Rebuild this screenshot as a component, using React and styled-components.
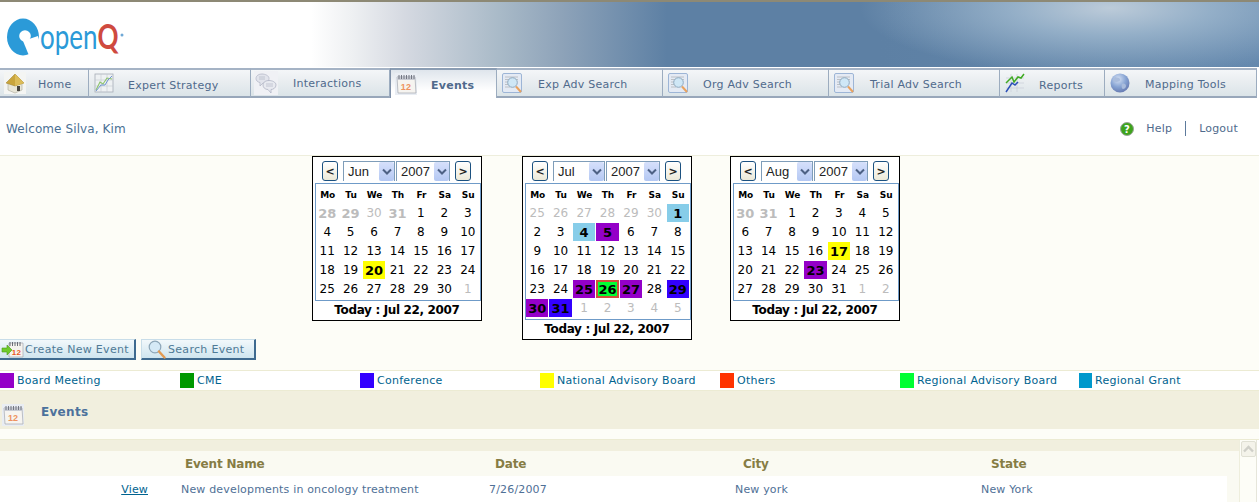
import React from 'react'
import styled, { createGlobalStyle } from 'styled-components'

const GlobalStyle = createGlobalStyle`
    html, body {
        margin: 0;
        padding: 0;
        height: 502px;
        overflow: hidden;
        background: #fff;
        font-family: "DejaVu Sans", Verdana, sans-serif;
        font-size: 11px;
    }
    * { box-sizing: border-box; }
`

/* ---- icons ---- */

const HouseIcon = () => (
    <svg width="22" height="22" viewBox="0 0 22 22">
        <rect width="22" height="22" fill="#f4f5f3" />
        <path d="M4 11v7l7 3 7-3v-7l-7-3z" fill="#e8e6d8" stroke="#a9a898" strokeWidth=".6" />
        <path d="M11 2 2 11l9 3 9-3z" fill="#c9a53c" stroke="#9c7f2a" strokeWidth=".5" />
        <path d="M11 2v12l9-3z" fill="#dcbc58" />
        <rect x="13" y="14" width="3" height="5" fill="#47453e" />
    </svg>
)

const ChartIcon = () => (
    <svg width="20" height="20" viewBox="0 0 20 20">
        <rect x="1" y="1" width="18" height="18" fill="#eef1f3" stroke="#a6adb6" strokeWidth=".8" />
        <path d="M1 7h18M1 13h18M7 1v18M13 1v18" stroke="#c5cbd2" strokeWidth=".6" />
        <path d="M2 17 6 9l3 2 4-6 5 1" fill="none" stroke="#8cc36a" strokeWidth="1.1" />
        <path d="M2 18 7 12l4 0 3-5 4-4" fill="none" stroke="#6f94cf" strokeWidth="1" />
    </svg>
)

const BubblesIcon = () => (
    <svg width="24" height="24" viewBox="0 0 24 24">
        <rect width="24" height="24" fill="#f0f1f5" />
        <path d="M2 7.5C2 4.5 5 3 8 3s7 1.500 7 4.500S12 12 9 12l-3 3v-3.500C3.500 11 2 9.500 2 7.500z" fill="#e2e4ec" stroke="#b5b9c8" strokeWidth=".8" />
        <path d="M9 14c0-3 3-4.500 6-4.500s7 1.500 7 4.500-3 4.500-5 4.500V22l-3-3.500c-3 0-5-2-5-4.500z" fill="#e8eaf0" stroke="#b0b4c4" strokeWidth=".8" />
        <path d="M5 6h6M5 8h6M12 13h7M12 15h7" stroke="#b9bdca" strokeWidth=".8" />
    </svg>
)

const CalendarIcon = () => (
    <svg width="22" height="22" viewBox="0 0 22 22">
        <rect width="22" height="22" fill="#e9edf3" />
        <path d="M2 4h18l1 16H3z" fill="#f6f4f0" stroke="#a4a7b0" strokeWidth=".7" />
        <path d="M2 3h18v4H2z" fill="#c9ccd4" />
        <path d="M4 2v4M6.500 2v4M9 2v4M11.500 2v4M14 2v4M16.500 2v4M19 2v4" stroke="#686c78" strokeWidth=".9" />
        <text x="11" y="16.500" textAnchor="middle" fontSize="9" fontWeight="700" fontFamily="Liberation Sans, sans-serif" fill="#ee9360">12</text>
    </svg>
)

const SearchDocIcon = () => (
    <svg width="21" height="21" viewBox="0 0 21 21">
        <rect x=".5" y=".5" width="19" height="19" rx="1.500" fill="#e4eaf4" stroke="#9db5d6" />
        <path d="M3 4h13M3 6.500h13M3 9h4M3 11.500h4M3 14h5" stroke="#b8bcc0" strokeWidth=".9" />
        <circle cx="10.500" cy="9.500" r="4.800" fill="#cfe7f6" stroke="#8fa9bf" />
        <path d="m14 13.500 5 5.500" stroke="#e9a25e" strokeWidth="2" />
    </svg>
)

const ReportIcon = () => (
    <svg width="20" height="20" viewBox="0 0 20 20">
        <path d="M1 5h18M1 10h18M1 15h18M6 1v18M12 1v18" stroke="#c9ced8" strokeWidth=".7" />
        <path d="M1 10 7 4l2 5 4-5 3 1 3-4" fill="none" stroke="#3faa22" strokeWidth="1.500" />
        <path d="M1 19 7 10l3 2 3-3" fill="none" stroke="#2b4fb8" strokeWidth="1.500" />
    </svg>
)

const GlobeIcon = () => (
    <svg width="20" height="20" viewBox="0 0 20 20">
        <defs>
            <radialGradient id="globe" cx="40%" cy="30%" r="75%">
                <stop offset="0" stopColor="#d7e2f4" />
                <stop offset=".55" stopColor="#86a3d3" />
                <stop offset="1" stopColor="#6477ae" />
            </radialGradient>
        </defs>
        <circle cx="10" cy="10" r="9.500" fill="url(#globe)" />
        <path d="M5 4c2 1 4 0 5 2s-2 3-4 3-3-1-3-2zM12 11c2-1 4 0 4 2s-2 3-3 3-2-3-1-5z" fill="#a9bcdc" />
    </svg>
)

const HelpIcon = () => (
    <svg width="14" height="14" viewBox="0 0 14 14">
        <circle cx="7" cy="7" r="6.500" fill="#3ea31c" stroke="#9aa59a" />
        <text x="7" y="10.500" textAnchor="middle" fontSize="10" fontWeight="700" fontFamily="DejaVu Sans, sans-serif" fill="#fff">?</text>
    </svg>
)

const CreateIcon = () => (
    <svg width="23" height="17" viewBox="0 0 23 17">
        <path d="M8 2h14v14H8z" fill="#f5f3ee" stroke="#a4a7b0" strokeWidth=".7" />
        <path d="M9 1v4M11.500 1v4M14 1v4M16.500 1v4M19 1v4" stroke="#5a5e68" strokeWidth=".9" />
        <text x="15.500" y="13.500" textAnchor="middle" fontSize="8" fontWeight="700" fontFamily="Liberation Sans, sans-serif" fill="#e8581e">12</text>
        <path d="M1 7h5V4l5 5-5 5v-3H1z" fill="#6ecb2a" stroke="#4b9a18" strokeWidth=".6" />
    </svg>
)

const LensIcon = () => (
    <svg width="18" height="19" viewBox="0 0 18 19">
        <circle cx="7" cy="7" r="5.800" fill="#d5e9f6" stroke="#8da6b8" strokeWidth="1.200" />
        <path d="m11 11.500 5.500 6" stroke="#e39a52" strokeWidth="2.400" strokeLinecap="round" />
    </svg>
)

const Logo = () => (
    <svg width="130" height="40" viewBox="0 0 130 40" overflow="visible">
        <ellipse cx="16" cy="19" rx="16" ry="18.500" fill="#2b9ad8" />
        <circle cx="18" cy="18" r="5.800" fill="#fff" />
        <path d="M16 23 23 40 36 36 31 18z" fill="#fff" />
        <text x="33" y="23" transform="scale(1 1.35)" fontSize="26" fontFamily="Lato, sans-serif" fill="#2b9ad8">
            open<tspan fill="#cf4a3f" fontWeight="700">Q</tspan>
        </text>
        <circle cx="115" cy="17" r="1.500" fill="#6fa8d6" />
    </svg>
)

/* ---- data ---- */

const TABS = [
    { label: 'Home', width: 89, icon: <HouseIcon />, dx: -2 },
    { label: 'Expert Strategy', width: 162, icon: <ChartIcon />, dx: -1, dy: 1 },
    { label: 'Interactions', width: 139, icon: <BubblesIcon />, dx: 2, dy: -1 },
    { label: 'Events', width: 107, icon: <CalendarIcon />, active: true },
    { label: 'Exp Adv Search', width: 166, icon: <SearchDocIcon />, dx: 1 },
    { label: 'Org Adv Search', width: 166, icon: <SearchDocIcon /> },
    { label: 'Trial Adv Search', width: 171, icon: <SearchDocIcon />, dx: 1 },
    { label: 'Reports', width: 105, icon: <ReportIcon />, dx: -1, dy: 1 },
    { label: 'Mapping Tools', width: 152, icon: <GlobeIcon /> }
]

const PURPLE = '#9400c8'
const BLUE = '#3300ff'
const YELLOW = '#ffff00'
const SKY = '#87cde9'

const CALENDARS = [
    {
        month: 'Jun',
        leading: [28, 29, 30, 31],
        boldMuted: [28, 29, 31],
        days: 30,
        trailing: [1],
        marks: { 20: YELLOW }
    },
    {
        month: 'Jul',
        leading: [25, 26, 27, 28, 29, 30],
        boldMuted: [],
        days: 31,
        trailing: [1, 2, 3, 4, 5],
        marks: { 1: SKY, 4: SKY, 5: PURPLE, 25: PURPLE, 26: '#00ff33', 27: PURPLE, 29: BLUE, 30: PURPLE, 31: BLUE },
        today: 26
    },
    {
        month: 'Aug',
        leading: [30, 31],
        boldMuted: [30, 31],
        days: 31,
        trailing: [1, 2],
        marks: { 17: YELLOW, 23: PURPLE }
    }
]

const LEGEND = [
    { label: 'Board Meeting', color: '#9400c8' },
    { label: 'CME', color: '#009900' },
    { label: 'Conference', color: '#3300ff' },
    { label: 'National Advisory Board', color: '#ffff00' },
    { label: 'Others', color: '#ff3300' },
    { label: 'Regional Advisory Board', color: '#00ff33' },
    { label: 'Regional Grant', color: '#0099cc', narrow: true }
]

const WEEK = ['Mo', 'Tu', 'We', 'Th', 'Fr', 'Sa', 'Su']

/* ---- components ---- */

const Chevron = () => (
    <svg width="10" height="7" viewBox="0 0 10 7">
        <path d="M1 1.500 5 5.500l4-4" fill="none" stroke="#4d6185" strokeWidth="2" />
    </svg>
)

const Calendar = ({ data }) => {
    const days = Array.from({ length: data.days }, (_, i) => i + 1)
    return (
        <CalendarBox>
            <CalendarTop>
                <StepButton>&lt;</StepButton>
                <FakeSelect $width={52}>
                    {data.month}
                    <SelectArrow>
                        <Chevron />
                    </SelectArrow>
                </FakeSelect>
                <FakeSelect $width={54}>
                    2007
                    <SelectArrow>
                        <Chevron />
                    </SelectArrow>
                </FakeSelect>
                <StepButton $last>&gt;</StepButton>
            </CalendarTop>
            <MonthGrid>
                {WEEK.map((w) => (
                    <WeekHead key={w}>{w}</WeekHead>
                ))}
                {data.leading.map((d) => (
                    <DayCell key={'l' + d} $muted $bold={data.boldMuted.includes(d)}>
                        {d}
                    </DayCell>
                ))}
                {days.map((d) => (
                    <DayCell key={d} $bg={data.marks[d]} $bold={!!data.marks[d]} $today={data.today === d}>
                        {d}
                    </DayCell>
                ))}
                {data.trailing.map((d) => (
                    <DayCell key={'t' + d} $muted>
                        {d}
                    </DayCell>
                ))}
            </MonthGrid>
            <TodayLine>Today : Jul 22, 2007</TodayLine>
        </CalendarBox>
    )
}

export default function App() {
    return (
        <Page>
            <GlobalStyle />
            <Header>
                <LogoWrap>
                    <Logo />
                </LogoWrap>
            </Header>
            <Nav>
                {TABS.map((t) => (
                    <Tab key={t.label} $width={t.width} $active={t.active}>
                        <TabIcon>{t.icon}</TabIcon>
                        <TabLabel $dx={t.dx} $dy={t.dy}>
                            {t.label}
                        </TabLabel>
                    </Tab>
                ))}
            </Nav>
            <WelcomeRow>
                <span>Welcome Silva, Kim</span>
                <UserLinks>
                    <HelpIcon />
                    <HelpLink>Help</HelpLink>
                    <LogoutLink>Logout</LogoutLink>
                </UserLinks>
            </WelcomeRow>
            <CalendarZone>
                <CalendarRow>
                    {CALENDARS.map((c) => (
                        <Calendar key={c.month} data={c} />
                    ))}
                </CalendarRow>
                <ActionRow>
                    <ActionButton $width={137} $pad={1} $gap={1}>
                        <CreateIcon />
                        Create New Event
                    </ActionButton>
                    <ActionButton $width={115} $pad={6} $gap={2}>
                        <LensIcon />
                        Search Event
                    </ActionButton>
                </ActionRow>
            </CalendarZone>
            <Legend>
                {LEGEND.map((l) => (
                    <LegendItem key={l.label}>
                        <Swatch $color={l.color} $narrow={l.narrow} />
                        {l.label}
                    </LegendItem>
                ))}
            </Legend>
            <SectionBar>
                <CalendarIcon />
                <SectionTitle>Events</SectionTitle>
            </SectionBar>
            <Spacer />
            <TableZone>
                <TableWrap>
                    <TableTop />
                    <HeadRow>
                        <span />
                        <HeadCell $pad={4}>Event Name</HeadCell>
                        <HeadCell $pad={6}>Date</HeadCell>
                        <HeadCell $pad={8}>City</HeadCell>
                        <HeadCell $pad={10}>State</HeadCell>
                    </HeadRow>
                    <BodyRow>
                        <ViewCell>
                            <ViewLink href="#">View</ViewLink>
                        </ViewCell>
                        <span>New developments in oncology treatment</span>
                        <span>7/26/2007</span>
                        <span>New york</span>
                        <span>New York</span>
                    </BodyRow>
                </TableWrap>
                <ScrollTrack>
                    <ScrollUp>
                        <svg width="11" height="8" viewBox="0 0 11 8">
                            <path d="M1 6.500 5.500 2 10 6.500" fill="none" stroke="#cfcfc8" strokeWidth="2.400" />
                        </svg>
                    </ScrollUp>
                </ScrollTrack>
            </TableZone>
        </Page>
    )
}

/* ---- styles ---- */

const Page = styled.div`
    width: 1259px;
    height: 502px;
    overflow: hidden;
    border-top: 2px solid #8d8975;
`

const Header = styled.header`
    height: 65px;
    margin-bottom: 1px;
    display: flex;
    align-items: center;
    background:
        radial-gradient(ellipse 250px 68px at 1110px 6px, #bccbd9 0%, rgba(160, 185, 207, 0.8) 40%, rgba(101, 137, 174, 0) 100%),
        linear-gradient(90deg, #fff 0, #fff 311px, #eff1f3 350px, #d5d9e1 405px, #a9bac8 499px, #8ea3b9 561px, #5d80a4 667px, #5d80a4 880px, #6589ae 1259px);
`

const LogoWrap = styled.div`
    padding: 0 0 0 7px;
    margin-top: 6px;
    display: flex;
`

const Nav = styled.nav`
    display: flex;
    height: 30px;
    width: 1257px;
`

const Tab = styled.div`
    flex: none;
    width: ${(p) => p.$width}px;
    display: flex;
    align-items: center;
    gap: 13px;
    padding-left: 3px;
    letter-spacing: 0.25px;
    font-weight: ${(p) => (p.$active ? 700 : 400)};
    color: #506a8c;
    border-top: 2px solid ${(p) => (p.$active ? '#8b9db3' : '#a5b3c5')};
    border-bottom: ${(p) => (p.$active ? '0' : '2px solid #98a7ba')};
    border-right: 1px solid #9cacbf;
    border-left: ${(p) => (p.$active ? '1px solid #7f90a8' : '0')};
    background: ${(p) =>
        p.$active
            ? 'linear-gradient(#dfe5ec, #ffffff 75%)'
            : 'linear-gradient(#f4f6f8 0%, #e9edf0 45%, #dbe4e8 100%)'};
`

const TabIcon = styled.span`
    width: 24px;
    display: flex;
    align-items: center;
    justify-content: center;
    flex: none;
`

const TabLabel = styled.span`
    margin-left: ${(p) => p.$dx || 0}px;
    padding-top: ${(p) => 3 + (p.$dy || 0) * 2}px;
`

const WelcomeRow = styled.div`
    height: 58px;
    display: flex;
    align-items: center;
    justify-content: space-between;
    padding: 4px 21px 0 6px;
    background: #fff;
    color: #4a7094;
    font-size: 12px;
    letter-spacing: 0.1px;
    border-bottom: 1px solid #eeeedd;
`

const UserLinks = styled.div`
    display: flex;
    align-items: center;
    font-size: 11px;
    letter-spacing: 0.2px;
    color: #506a8c;
`

const HelpLink = styled.span`
    margin-left: 12px;
    padding-right: 13px;
`

const LogoutLink = styled.span`
    border-left: 1px solid #5d7a9c;
    padding-left: 13px;
    line-height: 15px;
`

const CalendarZone = styled.div`
    height: 215px;
    background: #fdfdf7;
    border-bottom: 1px solid #ecebd3;
`

const CalendarRow = styled.div`
    display: flex;
    align-items: flex-start;
    gap: 40px;
    height: 183px;
    padding-left: 312px;

    & > *:last-child {
        margin-left: -2px;
    }
`

const CalendarBox = styled.div`
    width: 170px;
    border: 1px solid #000;
    background: #fff;
    padding: 0 0 0 2px;
`

const CalendarTop = styled.div`
    display: flex;
    align-items: flex-start;
    height: 26px;
    padding: 4px 0 0 7px;
`

const StepButton = styled.button`
    width: 16px;
    height: 20px;
    margin: 0 ${(p) => (p.$last ? '0 0 5px' : '5px 0 0')};
    margin-left: ${(p) => (p.$last ? '4px' : '0')};
    padding: 0;
    font-family: "DejaVu Sans", sans-serif;
    font-size: 11px;
    font-weight: 700;
    color: #222;
    background: linear-gradient(#ffffff, #ece9d8);
    border: 1px solid #1c5180;
    border-radius: 3px;
`

const FakeSelect = styled.div`
    position: relative;
    width: ${(p) => p.$width}px;
    height: 20px;
    margin-right: 1px;
    padding-left: 4px;
    border: 1px solid #7f9db9;
    border-bottom: 0;
    font-family: "Liberation Sans", sans-serif;
    font-size: 13px;
    line-height: 19px;
    color: #222;
    background: #fff;
`

const SelectArrow = styled.span`
    position: absolute;
    right: 0;
    top: 0;
    width: 15px;
    height: 19px;
    display: flex;
    align-items: center;
    justify-content: center;
    background: linear-gradient(#d6e0fb, #b4c8f3);
    border-radius: 2px;
`

const MonthGrid = styled.div`
    width: 166px;
    display: grid;
    grid-template-columns: repeat(7, 1fr);
    grid-auto-rows: 19px;
    padding: 1px 0;
    border: 1px solid #6f9bc8;
`

const WeekHead = styled.div`
    display: flex;
    align-items: center;
    justify-content: center;
    font-size: 9px;
    font-weight: 700;
    color: #000;
`

const DayCell = styled.div`
    display: flex;
    align-items: center;
    justify-content: center;
    margin: 0 1px 1px 0;
    font-size: ${(p) => (p.$bold ? '13px' : '12px')};
    font-weight: ${(p) => (p.$bold ? 700 : 400)};
    color: ${(p) => (p.$muted ? '#bcbcbc' : '#000')};
    background: ${(p) => p.$bg || 'transparent'};
    border: ${(p) => (p.$today ? '2px solid #d0503c' : '0')};
`

const TodayLine = styled.div`
    height: 19px;
    margin-left: -2px;
    text-align: center;
    font-size: 12px;
    font-weight: 700;
    letter-spacing: -0.35px;
    line-height: 18px;
    color: #000;
`

const ActionRow = styled.div`
    display: flex;
    gap: 5px;
    margin-left: -1px;
`

const ActionButton = styled.div`
    width: ${(p) => p.$width}px;
    height: 21px;
    display: flex;
    align-items: center;
    gap: ${(p) => p.$gap}px;
    padding-left: ${(p) => p.$pad}px;
    letter-spacing: 0.3px;
    color: #4f7a96;
    background: linear-gradient(#f2f8fb, #cfe5ef);
    border: 1px solid #c8dde9;
    border-right: 2px solid #3f6a8f;
    border-bottom: 2px solid #3f6a8f;
`

const Legend = styled.div`
    height: 20px;
    display: grid;
    grid-template-columns: repeat(7, 180px);
    align-items: center;
    background: #fff;
    border-bottom: 1px solid #ecebd3;
`

const LegendItem = styled.div`
    display: flex;
    align-items: center;
    gap: 3px;
    letter-spacing: 0.27px;
    color: #00638f;
    white-space: nowrap;
`

const Swatch = styled.span`
    width: ${(p) => (p.$narrow ? '13px' : '14px')};
    height: 15px;
    flex: none;
    margin-left: ${(p) => (p.$narrow ? '-1px' : '0')};
    background: ${(p) => p.$color};
`

const SectionBar = styled.div`
    height: 38px;
    display: flex;
    align-items: center;
    gap: 17px;
    padding: 10px 0 0 2px;
    background: #f1efde;
`

const SectionTitle = styled.h2`
    margin: 0 0 6px;
    font-size: 12px;
    font-weight: 700;
    letter-spacing: 0.3px;
    color: #4c719c;
`

const Spacer = styled.div`
    height: 11px;
    background: #fdfdf7;
    border-bottom: 1px solid #ecebd3;
`

const TableZone = styled.div`
    display: flex;
    width: 1257px;
`

const TableWrap = styled.div`
    width: 1240px;
`

const TableTop = styled.div`
    height: 11px;
    background: #f1efde;
`

const COLUMNS = '181px 308px 246px 246px 1fr'

const HeadRow = styled.div`
    height: 25px;
    display: grid;
    grid-template-columns: ${COLUMNS};
    align-items: center;
    background: #fafaf2;
`

const HeadCell = styled.div`
    padding-left: ${(p) => p.$pad}px;
    font-size: 12px;
    font-weight: 700;
    letter-spacing: -0.2px;
    color: #867c44;
`

const BodyRow = styled.div`
    height: 30px;
    width: 1227px;
    display: grid;
    grid-template-columns: ${COLUMNS};
    align-items: center;
    padding-bottom: 3px;
    letter-spacing: 0.17px;
    color: #4f7096;
    background: #fff;
    box-shadow: 13px 0 0 #fafaf2;
`

const ViewCell = styled.div`
    padding-right: 33px;
    text-align: right;
`

const ViewLink = styled.a`
    color: #00638f;
    text-decoration: underline;
`

const ScrollTrack = styled.div`
    flex: 1;
    height: 70px;
    padding: 1px 0 0 1px;
    background: #fdfdf7;
    border-left: 1px solid #eeeedd;
    border-right: 1px solid #e6e6da;
`

const ScrollUp = styled.div`
    width: 15px;
    height: 16px;
    display: flex;
    align-items: center;
    justify-content: center;
    background: #f4f3ea;
    border: 1px solid #e0e0d4;
    border-radius: 2px;
`
